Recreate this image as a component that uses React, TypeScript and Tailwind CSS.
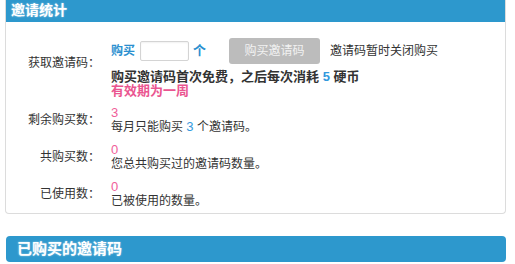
import React from 'react';

const font = "font-['Liberation_Sans','Noto_Sans_CJK_SC',sans-serif]";

const Row = ({ label, num, children }: { label: string; num: string; children: React.ReactNode }) => (
  <div className="flex items-center">
    <div className="w-[94px] shrink-0 text-right leading-[14px]">{label}</div>
    <div className="ml-[11px]">
      <div className="text-[13px] leading-[14px] text-[#f0609a]">{num}</div>
      <div className="leading-[14px]">{children}</div>
    </div>
  </div>
);

const App = () => {
  return (
    <div className={`w-[515px] h-[264px] overflow-hidden bg-white text-[12px] text-[#333] ${font}`}>
      {/* Stats panel */}
      <div className="ml-[5px] w-[501px] border border-t-0 border-[#dcdcdc] rounded-b-[4px]">
        <div className="h-[22px] bg-[#2d98cd] pl-[5px] text-[14px] font-bold leading-[21px] text-white [text-shadow:0_0_2px_rgba(255,255,255,0.6)]">
          邀请统计
        </div>

        <div className="flex flex-col pt-[16px] pb-[5px]">
          {/* Get code row */}
          <div className="mb-[8px] flex items-start">
            <div className="w-[94px] shrink-0 pt-[19px] text-right leading-[12px]">获取邀请码：</div>
            <div className="ml-[11px]">
              <div className="flex h-[26px] items-center">
                <span className="font-bold text-[#2a8fcf]">购买</span>
                <input
                  type="text"
                  className="ml-[5px] h-[20px] w-[49px] rounded-[2px] border border-[#d4d4d4] bg-white shadow-[inset_0_1px_2px_rgba(0,0,0,0.06)] outline-none"
                />
                <span className="ml-[4px] text-[13px] font-bold text-[#2a8fcf]">个</span>
                <button className="ml-[23px] h-[26px] w-[91px] rounded-[3px] bg-[#bcbcbc] text-[12px] text-[#f2f2f2]">
                  购买邀请码
                </button>
                <span className="ml-[10px]">邀请码暂时关闭购买</span>
              </div>
              <div className="mt-[6px] text-[13px] font-bold leading-[14px] text-[#333]">
                购买邀请码首次免费，之后每次消耗 <span className="text-[#3399dd]">5</span> 硬币
              </div>
              <div className="text-[13px] font-bold leading-[14px] text-[#ea5590]">有效期为一周</div>
            </div>
          </div>

          <div className="flex flex-col gap-[9px]">
            <Row label="剩余购买数：" num="3">
              每月只能购买 <span className="text-[13px] text-[#3399dd]">3</span> 个邀请码。
            </Row>
            <Row label="共购买数：" num="0">
              您总共购买过的邀请码数量。
            </Row>
            <Row label="已使用数：" num="0">
              已被使用的数量。
            </Row>
          </div>
        </div>
      </div>

      {/* Purchased codes panel */}
      <div className="ml-[6px] mt-[22px] h-[26px] w-[500px] rounded-[4px] bg-[#2d98cd] pl-[11px] text-[15px] font-bold leading-[26px] text-white [text-shadow:0_0_2px_rgba(255,255,255,0.6)]">
        已购买的邀请码
      </div>
    </div>
  );
};

export default App;
